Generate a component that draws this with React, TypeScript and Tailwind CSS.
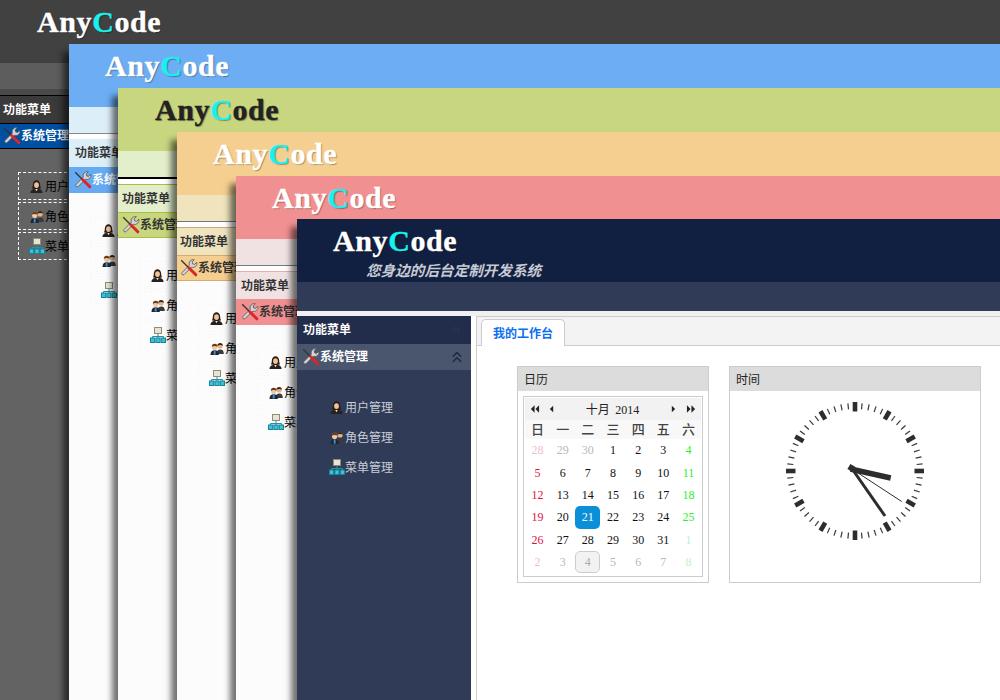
import React from "react";
import { ChevronsLeft, ChevronsUp } from "lucide-react";

const sans = "font-['Noto_Sans_CJK_SC','Noto_Sans',sans-serif]";

function ToolsIcon() {
  return (
    <svg width="18" height="18" viewBox="0 0 18 18" className="shrink-0">
      <path
        d="M16.800 3.200 14.600 5.400 12.600 4.900 12.100 2.900 14.300 0.700A4.200 4.200 0 0 0 9.300 6.200L2 13.500A1.500 1.500 0 0 0 4.100 15.600L11.400 8.300A4.200 4.200 0 0 0 16.800 3.200Z"
        fill="#d4d4d4"
        stroke="#555"
        strokeWidth="0.8"
      />
      <path d="M1.200 1.200 9 9" stroke="#333" strokeWidth="1.300" />
      <path d="M8.800 8.800 15.800 15.800" stroke="#d9262b" strokeWidth="3" strokeLinecap="round" />
    </svg>
  );
}

function UserIcon() {
  return (
    <svg width="13" height="15" viewBox="0 0 14 15" className="shrink-0">
      <path d="M0.500 14.500c0-3 2.500-4.500 6.500-4.500s6.500 1.500 6.500 4.500z" fill="#26221f" />
      <path d="M5.500 10 7 12.500 8.500 10z" fill="#f4e6d8" />
      <path d="M3 6c0-7 8-7 8 0 0 2 .5 3 1 3.500-1.500 1-8.500 1-10 0 .5-.5 1-1.500 1-3.500z" fill="#2c1c14" />
      <ellipse cx="7" cy="6" rx="2.600" ry="3.200" fill="#eec39d" />
    </svg>
  );
}

function UsersIcon() {
  return (
    <svg width="14" height="15" viewBox="0 0 15 15" className="shrink-0">
      <path d="M7 13.500c0-3.500 1.500-5 4-5s3.800 1.500 3.800 5z" fill="#3a3a3a" />
      <circle cx="10.800" cy="4.800" r="2.800" fill="#e3b48c" />
      <path d="M7.800 4.500c0-3.500 6-4 6 0-1.500-1-4-1-6 0z" fill="#3b2417" />
      <path d="M0.500 14.500c0-3.500 2-5 4.500-5s4.500 1.500 4.500 5z" fill="#1f2430" />
      <path d="M4.200 9.500h1.600l.4 4.500h-2.400z" fill="#3d8fd0" />
      <ellipse cx="5" cy="5.800" rx="2.900" ry="3.300" fill="#f0c8a4" />
      <path d="M1.900 5.500c-.3-4 6.400-4.500 6.200 0-2-1-4.200-1-6.200 0z" fill="#6b3a1c" />
    </svg>
  );
}

function SitemapIcon() {
  return (
    <svg width="16" height="16" viewBox="0 0 16 16" className="shrink-0">
      <path d="M8 6.500V9.500M2.500 11.500V9.500h11v2M8 9.500v2" fill="none" stroke="#1f93a8" strokeWidth="1" />
      <rect x="4.500" y="0.500" width="7" height="6" fill="#e8e4cf" stroke="#8c8c78" />
      <rect x="0.500" y="11" width="4.200" height="4.500" fill="#43c0d6" stroke="#13859b" />
      <rect x="5.900" y="11" width="4.200" height="4.500" fill="#43c0d6" stroke="#13859b" />
      <rect x="11.300" y="11" width="4.200" height="4.500" fill="#43c0d6" stroke="#13859b" />
    </svg>
  );
}

type Theme = {
  pos: string;
  shadow?: boolean;
  header: string;
  logoPad: string;
  logoText: string;
  band: string;
  gap: string;
  title: string;
  titlePad: string;
  row: string;
  rowPad: string;
  body: string;
  item: string;
  dashed: string;
  subtitle?: boolean;
};

const menu = [
  { label: "用户管理", icon: <UserIcon /> },
  { label: "角色管理", icon: <UsersIcon /> },
  { label: "菜单管理", icon: <SitemapIcon /> },
];

function Sidebar({ t }: { t: Theme }) {
  return (
    <div className={`w-[174px] shrink-0 flex flex-col ${t.body}`}>
      <div className={`h-[28px] flex items-center justify-between pr-[8px] pb-[2px] text-[12px] font-bold ${t.titlePad} ${t.title}`}>
        功能菜单
        {t.subtitle && <ChevronsLeft size={13} className="text-[#2b3654]" />}
      </div>
      <div className={`h-[26px] flex items-center pr-[5px] text-[12px] font-bold ${t.rowPad} ${t.row}`}>
        <ToolsIcon />
        <span className="flex-1 whitespace-nowrap pb-[2px]">系统管理</span>
        {t.subtitle && <ChevronsUp size={18} strokeWidth={2} className="text-[#20283d]" />}
      </div>
      <div className={`pt-[22px] flex flex-col ${t.item}`}>
        {menu.map((m) => (
          <div key={m.label} className={`h-[28px] my-[1px] ml-[21px] w-[105px] flex items-center border border-dashed text-[12px] whitespace-nowrap ${t.dashed}`}>
            <span className="ml-[9px] w-[17px] flex justify-center">{m.icon}</span>
            <span>{m.label}</span>
          </div>
        ))}
      </div>
    </div>
  );
}

const days: [string, string][][] = [
  [["28", "o-sun"], ["29", "o"], ["30", "o"], ["1", "n"], ["2", "n"], ["3", "n"], ["4", "sat"]],
  [["5", "sun"], ["6", "n"], ["7", "n"], ["8", "n"], ["9", "n"], ["10", "n"], ["11", "sat"]],
  [["12", "sun"], ["13", "n"], ["14", "n"], ["15", "n"], ["16", "n"], ["17", "n"], ["18", "sat"]],
  [["19", "sun"], ["20", "n"], ["21", "sel"], ["22", "n"], ["23", "n"], ["24", "n"], ["25", "sat"]],
  [["26", "sun"], ["27", "n"], ["28", "n"], ["29", "n"], ["30", "n"], ["31", "n"], ["1", "o-sat"]],
  [["2", "o-sun"], ["3", "o"], ["4", "today"], ["5", "o"], ["6", "o"], ["7", "o"], ["8", "o-sat"]],
];

const dayStyle: Record<string, string> = {
  n: "text-[#111]",
  sun: "text-[#e0103c]",
  sat: "text-[#2bf02b]",
  o: "text-[#b8b8b8]",
  "o-sun": "text-[#f2bcc6]",
  "o-sat": "text-[#c2f2c2]",
  sel: "bg-[#0a8fd8] text-white rounded-[5px]",
  today: "bg-[#f2f2f2] text-[#aaa] border border-[#ccc] rounded-[5px]",
};

function Tri({ dir, double }: { dir: "l" | "r"; double?: boolean }) {
  const a = dir === "l" ? "M5 1 1 5l4 4z" : "M1 1l4 4-4 4z";
  const b = dir === "l" ? "M10 1 6 5l4 4z" : "M6 1l4 4-4 4z";
  return (
    <svg width={double ? 10 : 5} height="10" viewBox={double ? "0 0 11 10" : "0 0 6 10"}>
      <path d={a} fill="#222" />
      {double && <path d={b} fill="#222" />}
    </svg>
  );
}

function Calendar() {
  return (
    <div className="m-[5px] h-[181px] border border-[#ccc] p-[1px] flex flex-col">
      <div className="h-[22px] shrink-0 bg-[#f2f2f2] flex items-center pl-[5px] pr-[5px] text-[#222]">
        <Tri dir="l" double />
        <span className="ml-[9px]"><Tri dir="l" /></span>
        <span className="flex-1 text-center text-[12px]">
          十月 <span className="font-['Liberation_Serif',serif] ml-[3px]">2014</span>
        </span>
        <span className="mr-[10px]"><Tri dir="r" /></span>
        <Tri dir="r" double />
      </div>
      <div className="h-[19px] shrink-0 bg-[#f8f8f8] grid grid-cols-7 text-center text-[13px] font-medium leading-[18px] text-[#444]">
        {["日", "一", "二", "三", "四", "五", "六"].map((d) => (
          <span key={d}>{d}</span>
        ))}
      </div>
      <div className="grid grid-cols-7 auto-rows-[22.4px] font-['Liberation_Serif',serif] text-[12px] text-center">
        {days.flat().map(([d, k], i) => (
          <span key={i} className={`flex items-center justify-center ${dayStyle[k]}`}>{d}</span>
        ))}
      </div>
    </div>
  );
}

function Clock() {
  return (
    <svg width="150" height="150" viewBox="-75 -75 150 150">
      {Array.from({ length: 60 }, (_, i) =>
        i % 5 === 0 ? (
          <rect key={i} x="-2.300" y="-69" width="4.600" height="9.500" fill="#2d2d2d" transform={`rotate(${i * 6})`} />
        ) : (
          <rect key={i} x="-0.600" y="-68" width="1.200" height="6" fill="#3a3a3a" transform={`rotate(${i * 6})`} />
        )
      )}
      <line x1="-3.500" y1="-3" x2="30" y2="45" stroke="#2d2d2d" strokeWidth="3" />
      <line x1="-2" y1="-1.300" x2="46.700" y2="30.500" stroke="#2d2d2d" strokeWidth="1" />
      <line x1="-4.500" y1="-2" x2="35.700" y2="7" stroke="#2d2d2d" strokeWidth="5.500" />
      <rect x="-6.500" y="-6" width="6" height="6" fill="#2d2d2d" transform="rotate(30 -3.500 -3)" />
    </svg>
  );
}

function Panel({ title, width, children }: { title: string; width: string; children: React.ReactNode }) {
  return (
    <div className={`${width} h-[217px] border border-[#ccc] bg-white`}>
      <div className="h-[24px] bg-[#dcdcdc] pl-[6px] pb-[1px] text-[12px] leading-[23px] text-[#222]">{title}</div>
      {children}
    </div>
  );
}

function Workspace() {
  return (
    <div className="flex-1 bg-white pl-[5px] flex">
      <div className="flex-1 border-l border-[#ccc] flex flex-col">
        <div className="h-[30px] shrink-0 bg-[#f3f3f3] border-y border-[#ccc] pl-[4px] flex items-end">
          <div className="w-[84px] h-[27px] -mb-[1px] bg-white border border-b-0 border-[#ccc] rounded-t-[5px] text-center text-[12px] font-bold leading-[26px] text-[#0a6ff0]">
            我的工作台
          </div>
        </div>
        <div className="pl-[40px] pt-[20px] flex gap-[20px]">
          <Panel title="日历" width="w-[192px]">
            <Calendar />
          </Panel>
          <Panel title="时间" width="w-[252px]">
            <div className="flex justify-center pt-[5px]">
              <Clock />
            </div>
          </Panel>
        </div>
      </div>
    </div>
  );
}

function Win({ t, children }: { t: Theme; children?: React.ReactNode }) {
  return (
    <div className={`absolute right-0 bottom-0 flex flex-col ${sans} ${t.pos} ${t.shadow ? "shadow-[-6px_8px_6px_rgba(0,0,0,0.55)]" : ""}`}>
      <div className={`h-[63px] shrink-0 ${t.header} ${t.logoPad}`}>
        <div className={`h-[44px] font-['Liberation_Serif',serif] font-bold text-[30px] leading-[44px] tracking-[0.6px] [-webkit-text-stroke:0.35px] [text-shadow:1px_1px_1px_rgba(0,0,0,0.35)] ${t.logoText}`}>
          Any<span className="text-[#19f0f0]">C</span>ode
        </div>
        {t.subtitle && (
          <div className="ml-[33px] text-[14.6px] leading-[14px] font-bold italic text-[#c6cad2]">您身边的后台定制开发系统</div>
        )}
      </div>
      <div className={`shrink-0 ${t.band}`} />
      <div className={`shrink-0 ${t.gap}`} />
      <div className="flex-1 flex min-h-0">
        <Sidebar t={t} />
        {children}
      </div>
    </div>
  );
}

const themes: Theme[] = [
  {
    pos: "left-[-3px] top-0",
    header: "bg-[#414141]",
    logoPad: "pl-[40px]",
    logoText: "text-white",
    band: "h-[26px] bg-[#5d5d5d]",
    gap: "h-[6px] bg-[#4a4a4a]",
    title: "bg-[#3a3a3a] text-white border-t border-black",
    titlePad: "pl-[6px]",
    row: "bg-[#004fa0] text-white border-y border-black",
    rowPad: "pl-[6px]",
    body: "bg-[#636363]",
    item: "text-black",
    dashed: "border-white",
  },
  {
    pos: "left-[69px] top-[44px]",
    shadow: true,
    header: "bg-[#6cadf3]",
    logoPad: "pl-[36px]",
    logoText: "text-white",
    band: "h-[26px] bg-[#dceef8]",
    gap: "h-[6px] bg-white border-t border-[#888]",
    title: "bg-[#dceef8] text-[#333]",
    titlePad: "pl-[6px]",
    row: "bg-[#66aaf2] text-white",
    rowPad: "pl-[5px]",
    body: "bg-[#fcfcfc]",
    item: "text-black",
    dashed: "border-[#f8f8f8]",
  },
  {
    pos: "left-[118px] top-[88px]",
    shadow: true,
    header: "bg-[#c8d67f]",
    logoPad: "pl-[37px]",
    logoText: "text-[#222]",
    band: "h-[26px] bg-[#e3efca]",
    gap: "h-[7px] bg-white border-t-2 border-black",
    title: "bg-[#e3efca] text-[#333] border-t border-[#a8bf3f]",
    titlePad: "pl-[4px]",
    row: "bg-[#c8d67f] text-[#333] border-y border-[#a8bf3f]",
    rowPad: "pl-[4px]",
    body: "bg-[#fcfcfc]",
    item: "text-black",
    dashed: "border-[#f8f8f8]",
  },
  {
    pos: "left-[177px] top-[132px]",
    shadow: true,
    header: "bg-[#f5cf90]",
    logoPad: "pl-[36px]",
    logoText: "text-white",
    band: "h-[26px] bg-[#efe4bd]",
    gap: "h-[6px] bg-white border-t border-[#777]",
    title: "bg-[#f0e4bf] text-[#333] border-t border-[#c9a97c]",
    titlePad: "pl-[3px]",
    row: "bg-[#f5cf90] text-[#333] border-y border-[#d8ab6c]",
    rowPad: "pl-[3px]",
    body: "bg-[#fcfcfc]",
    item: "text-black",
    dashed: "border-[#f8f8f8]",
  },
  {
    pos: "left-[236px] top-[176px]",
    shadow: true,
    header: "bg-[#f19091]",
    logoPad: "pl-[36px]",
    logoText: "text-white",
    band: "h-[26px] bg-[#f0e2e2]",
    gap: "h-[6px] bg-white border-t border-[#777]",
    title: "bg-[#f0e2e2] text-[#333] border-t border-[#f0a8a8]",
    titlePad: "pl-[5px]",
    row: "bg-[#f19091] text-[#333]",
    rowPad: "pl-[5px]",
    body: "bg-[#fcfcfc]",
    item: "text-black",
    dashed: "border-[#f8f8f8]",
  },
  {
    pos: "left-[297px] top-[219px]",
    shadow: true,
    subtitle: true,
    header: "bg-[#112041]",
    logoPad: "pl-[36px]",
    logoText: "text-white",
    band: "h-[29px] bg-[#303c57]",
    gap: "h-[5px] bg-[#f0f0f0]",
    title: "bg-[#222d4b] text-white",
    titlePad: "pl-[6px]",
    row: "bg-[#4a566e] text-white",
    rowPad: "pl-[5px]",
    body: "bg-[#303c57]",
    item: "text-[#c9cdd6]",
    dashed: "border-transparent",
  },
];

export default function App() {
  return (
    <div className="relative w-[1000px] h-[700px] overflow-hidden bg-[#636363]">
      {themes.map((t, i) => (
        <Win key={i} t={t}>
          {i === themes.length - 1 && <Workspace />}
        </Win>
      ))}
    </div>
  );
}
